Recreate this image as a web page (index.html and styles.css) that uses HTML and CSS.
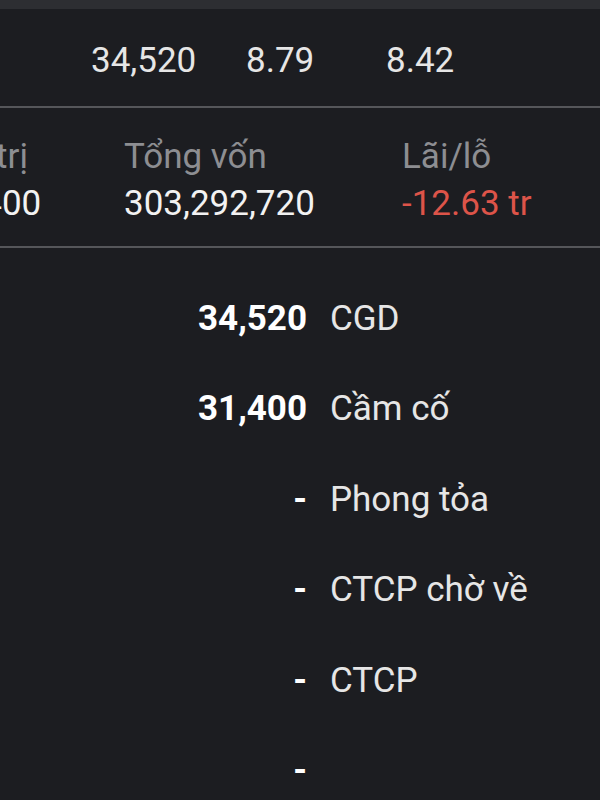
FILE: index.html
```html
<!DOCTYPE html>
<html lang="vi">
<head>
  <meta charset="UTF-8" />
  <title>Danh mục</title>
  <meta name="viewport" content="width=device-width, initial-scale=1.0" />
  <link rel="stylesheet" href="styles.css">
</head>
<body>
  <div class="topbar"></div>

  <div class="price-row">
    <span></span>
    <span>34,520</span>
    <span>8.79</span>
    <span>8.42</span>
  </div>

  <div class="summary">
    <div class="cell">
      <div class="label">Giá trị</div>
      <div class="value">31,400</div>
    </div>
    <div class="cell">
      <div class="label">Tổng vốn</div>
      <div class="value">303,292,720</div>
    </div>
    <div class="cell">
      <div class="label">Lãi/lỗ</div>
      <div class="value loss">-12.63 tr</div>
    </div>
  </div>

  <div class="detail">
    <span class="num">34,520</span><span class="name">CGD</span>
    <span class="num">31,400</span><span class="name">Cầm cố</span>
    <span class="num">-</span><span class="name">Phong tỏa</span>
    <span class="num">-</span><span class="name">CTCP chờ về</span>
    <span class="num">-</span><span class="name">CTCP</span>
    <span class="num">-</span><span class="name"></span>
  </div>
</body>
</html>
```

FILE: styles.css
```css
:root {
  --bg: #1c1d21;
  --bar: #2d2e32;
  --line: #55565a;
  --text: #e6e6e6;
  --muted: #8d8e92;
  --loss: #dd5449;
}

body {
  margin: 0;
  background: var(--bg);
  color: var(--text);
  font-family: Roboto, 'Noto Sans', sans-serif;
  font-size: 35px;
  overflow: hidden;
}

.topbar {
  height: 9px;
  background: var(--bar);
}

.price-row {
  display: grid;
  grid-template-columns: 91px 155px 140px auto;
  line-height: 40px;
  padding: 32px 0 25px;
  border-bottom: 2px solid var(--line);
}

.summary {
  display: grid;
  grid-template-columns: 188px 278px auto;
  margin-left: -64px;
  padding: 25px 0 19px;
  line-height: 47px;
  border-bottom: 2px solid var(--line);
  white-space: nowrap;
}

.label {
  color: var(--muted);
}

.value {
  color: #f2f2f2;
}

.value.loss {
  color: var(--loss);
}

.detail {
  display: grid;
  grid-template-columns: 307px auto;
  column-gap: 23px;
  padding-top: 26px;
  line-height: 90.4px;
}

.num {
  text-align: right;
  font-weight: bold;
  color: #fff;
}

.name {
  color: var(--text);
}
```
